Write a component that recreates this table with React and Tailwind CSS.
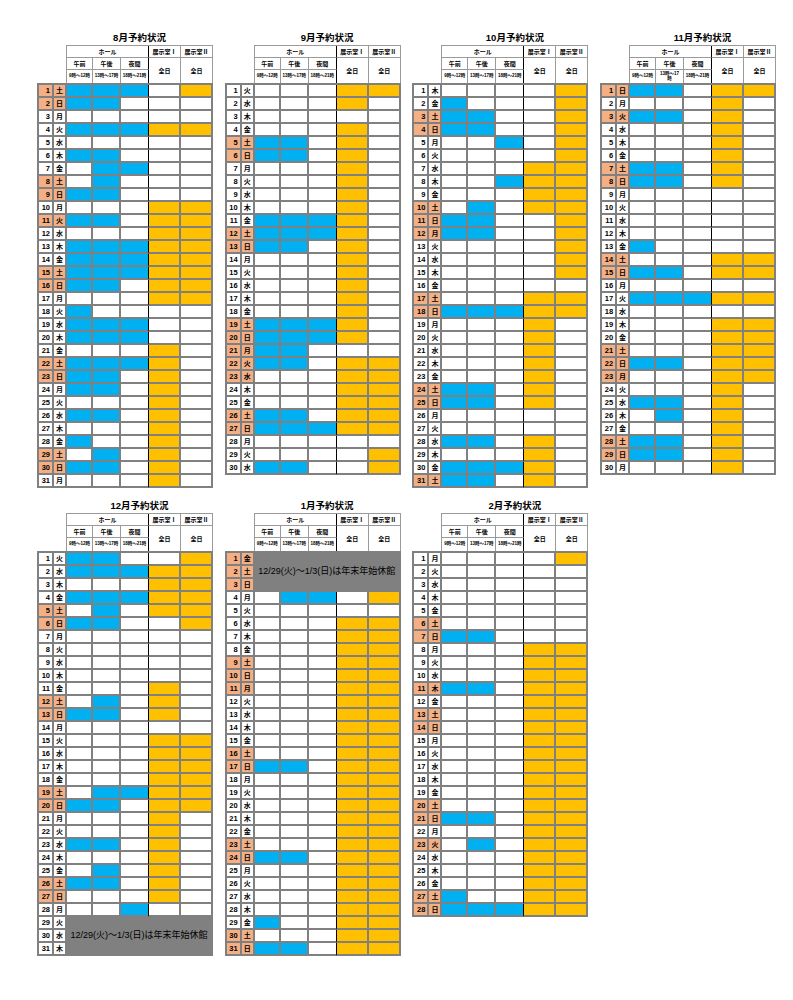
import React from 'react';

const WEEK = ['日', '月', '火', '水', '木', '金', '土'];
const CLOSED_TEXT = '12/29(火)～1/3(日)は年末年始休館';

// b = ホール予約, o = 展示室予約, . = 空き, x = 休館
const months = [
  {
    title: '8月予約状況',
    y: 2020,
    m: 7,
    hol: [11],
    rows:
      'bbb.o bb... ..... bbboo ..... bb... .bb.. .b... bb... ...oo bb.oo ...oo bbboo bbboo bbboo bb.oo ...oo b.... bbb.. bbb.. ...o. bbbo. bb.o. bb.o. ...o. bb.o. ...o. b..o. .b.o. bb.o. ...o.'
  },
  {
    title: '9月予約状況',
    y: 2020,
    m: 8,
    hol: [21, 22, 23],
    rows:
      '...oo ...o. ..... ...o. bb.o. bb.o. ...o. ...o. ...o. ...o. bbbo. bbbo. bb.o. ...o. ...o. ...o. ...o. ...o. bbbo. bbbo. bb... bb.oo ...oo ...oo ...oo bb.oo bbboo ..... ....o bb..o'
  },
  {
    title: '10月予約状況',
    y: 2020,
    m: 9,
    hol: [12],
    rows:
      '....o b...o bb..o bb..o ..b.o ....o ...oo ..boo ...oo .b.oo bb..o bb..o ....o ....o ....o ..... ...oo bbboo ...o. ...o. ...o. ...o. ...o. bb.o. bb.o. ..... ..... bb.o. ...o. bbbo. bb.o.'
  },
  {
    title: '11月予約状況',
    y: 2020,
    m: 10,
    hol: [3, 23],
    wrapPm: true,
    rows:
      'bb.oo ...o. bb.o. ...o. ...o. ...o. bb.o. bb.o. ..... ..... ..... ..... b.... ...oo bb.oo ..... bbboo ..... ...oo ...oo ...oo bb.oo ...oo ...o. bb.o. .b.o. ...o. bb.o. bb.o. ...o.'
  },
  {
    title: '12月予約状況',
    y: 2020,
    m: 11,
    hol: [],
    rows:
      'bb..o bbboo ...oo bbboo .b.oo bb..o ..... ..... ..... ..... ...o. .b.o. bb.o. ..... ...oo ...oo ...oo ...oo .bboo bb.oo ...o. ...o. bb.o. ...o. .b.o. bb.o. ...o. ..b.. x x x'
  },
  {
    title: '1月予約状況',
    y: 2021,
    m: 0,
    hol: [1, 2, 3, 11],
    rows:
      'x x x .bb.o ..... ...oo ...oo ...oo ...oo ...oo ...oo ...oo ...oo ...oo ...oo ...oo bb.oo ...oo ...oo ...oo ...oo ...oo ...oo bb.oo ...oo ...oo ...oo ...oo b..oo ...oo bb.oo'
  },
  {
    title: '2月予約状況',
    y: 2021,
    m: 1,
    hol: [11, 23],
    rows:
      '....o ..... ..... ..... ..... ..... bb... ...oo ...oo ...oo bb.oo ...oo ...oo ...oo ...oo ...oo ...oo ...oo ...oo ...oo bb.oo ...oo .b.oo ...oo ...oo ...oo b..oo bbboo'
  }
];

const CELL = 'border-r-2 border-b-2 border-[#808080]';
const NIGHT = 'border-b-2 border-b-[#808080] border-r border-r-black';
const FILL = { b: 'bg-[#00b0f0]', o: 'bg-[#ffc000]', '.': 'bg-white' };

function Header({ wrapPm }) {
  const h = 'flex items-center justify-center font-bold leading-none text-[6px] border-[#9a9a9a]';
  const t = 'flex items-center justify-center text-center leading-none text-[4.5px] font-bold border-[#9a9a9a]';
  return (
    <div className="flex">
      <div className="w-[29px] shrink-0" />
      <div className="grid grid-cols-[26px_28px_28px_32px_32px] grid-rows-[12px_12px_13px] border-l border-t border-[#9a9a9a]">
        <div className={`${h} col-span-3 border-b border-r border-r-black`}>ホール</div>
        <div className={`${h} border-r border-b`}>展示室Ⅰ</div>
        <div className={`${h} border-r border-b`}>展示室Ⅱ</div>
        <div className={`${h} border-r border-b`}>午前</div>
        <div className={`${h} border-r border-b`}>午後</div>
        <div className={`${h} border-b border-r border-r-black`}>夜間</div>
        <div className={`${h} row-span-2 border-r`}>全日</div>
        <div className={`${h} row-span-2 border-r`}>全日</div>
        <div className={`${t} border-r`}>9時～12時</div>
        <div className={`${t} border-r`}>
          {wrapPm ? (
            <span>
              13時～17
              <br />時
            </span>
          ) : (
            '13時～17時'
          )}
        </div>
        <div className={`${t} border-r border-r-black`}>18時～21時</div>
      </div>
    </div>
  );
}

function Body({ month }) {
  const codes = month.rows.split(' ');
  const cells = [];
  let closedShown = false;

  codes.forEach((code, i) => {
    const day = i + 1;
    const wd = new Date(month.y, month.m, day).getDay();
    const red = wd === 0 || wd === 6 || month.hol.includes(day);
    const bg = red ? 'bg-[#f4b084]' : 'bg-white';

    cells.push(
      <div key={`d${day}`} className={`${CELL} ${bg} flex items-center justify-end pr-[2px] text-[7.5px] font-bold leading-none`}>
        {day}
      </div>
    );
    cells.push(
      <div key={`w${day}`} className={`${CELL} ${bg} flex items-center justify-center text-[7px] font-bold leading-none`}>
        {WEEK[wd]}
      </div>
    );

    if (code === 'x') {
      if (!closedShown) {
        closedShown = true;
        cells.push(
          <div
            key={`c${day}`}
            className={`${CELL} col-span-5 row-span-3 bg-[#808080] flex items-center justify-center whitespace-nowrap text-[9px] text-black leading-none`}
          >
            {CLOSED_TEXT}
          </div>
        );
      }
      return;
    }

    code.split('').forEach((c, j) => {
      cells.push(<div key={`s${day}-${j}`} className={`${j === 2 ? NIGHT : CELL} ${FILL[c]}`} />);
    });
  });

  return (
    <div className="grid grid-cols-[15px_13px_26px_28px_28px_32px_32px] auto-rows-[13px] border-l-2 border-t-2 border-[#808080]">
      {cells}
    </div>
  );
}

function MonthTable({ month }) {
  return (
    <div className="w-[176px]">
      <div className="ml-[29px] h-[15px] flex items-center justify-center text-[9.5px] font-bold leading-none">
        {month.title}
      </div>
      <Header wrapPm={month.wrapPm} />
      <Body month={month} />
    </div>
  );
}

export default function App() {
  return (
    <div className="w-[793px] h-[1000px] bg-white text-black font-['Liberation_Sans','Noto_Sans_CJK_JP',sans-serif] pt-[30px] pl-[37px]">
      <div className="grid grid-cols-[176px_176px_176px_176px] gap-x-[11.7px] gap-y-[10px] items-start">
        {months.map(month => (
          <MonthTable key={month.title} month={month} />
        ))}
      </div>
    </div>
  );
}
